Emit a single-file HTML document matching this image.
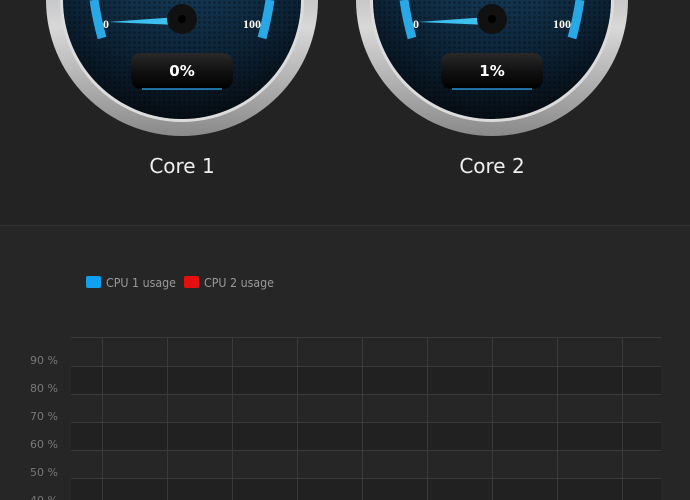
<!DOCTYPE html>
<html><head><style>
body{margin:0;width:690px;height:500px;overflow:hidden;background:#262626;font-family:"DejaVu Sans","Liberation Sans",sans-serif}
</style></head><body>
<svg width="690" height="500" xmlns="http://www.w3.org/2000/svg" style="position:absolute;left:0;top:0">
<defs>
<linearGradient id="ring" x1="0" y1="0" x2="0" y2="1">
<stop offset="0" stop-color="#777"/><stop offset="0.6" stop-color="#d8d8d8"/><stop offset="1" stop-color="#8a8a8a"/></linearGradient>
<radialGradient id="face" cx="0.5" cy="0.2" r="0.8">
<stop offset="0" stop-color="#1d4b70"/><stop offset="0.7" stop-color="#0c2336"/><stop offset="1" stop-color="#060d14"/></radialGradient>
<pattern id="hex" width="5" height="5" patternUnits="userSpaceOnUse"><circle cx="2.5" cy="2.5" r="1.3" fill="#000" opacity="0.35"/></pattern>
<linearGradient id="pill" x1="0" y1="0" x2="0" y2="1"><stop offset="0" stop-color="#2a2a2a"/><stop offset="0.5" stop-color="#111"/><stop offset="1" stop-color="#000"/></linearGradient>
<g id="gauge">
<circle cx="0" cy="0" r="136" fill="url(#ring)"/>
<circle cx="0" cy="0" r="122" fill="#dcdcdc"/>
<circle cx="0" cy="0" r="119" fill="url(#face)"/>
<circle cx="0" cy="0" r="119" fill="url(#hex)"/>
<path d="M-88 0 Q-85 20 -80 38" stroke="#29a8e6" stroke-width="9" fill="none"/>
<path d="M88 0 Q85 20 80 38" stroke="#29a8e6" stroke-width="9" fill="none"/>
<polygon points="-74,22 -4,17 -4,25" fill="#3cc0f0"/>
<circle cx="0" cy="19" r="15" fill="#111"/>
<circle cx="0" cy="19" r="4" fill="#000"/>
<text x="-76" y="28" fill="#fff" font-size="12" font-weight="bold" font-family="Liberation Serif,serif" text-anchor="middle">0</text>
<text x="70" y="28" fill="#fff" font-size="12" font-weight="bold" font-family="Liberation Serif,serif" text-anchor="middle">100</text>
<rect x="-51" y="53" width="102" height="36" rx="10" fill="url(#pill)"/>
<line x1="-40" y1="89" x2="40" y2="89" stroke="#2a90d0" stroke-width="1.5"/>
</g>
</defs>
<rect x="0" y="0" width="690" height="225" fill="#232323"/>
<line x1="0" y1="225.5" x2="690" y2="225.5" stroke="#333"/>
<use href="#gauge" x="182" y="0"/>
<use href="#gauge" x="492" y="0"/>
<text x="182" y="76" fill="#fff" font-size="15" font-weight="bold" text-anchor="middle">0%</text>
<text x="492" y="76" fill="#fff" font-size="15" font-weight="bold" text-anchor="middle">1%</text>
<text x="182" y="173" fill="#eee" font-size="20" text-anchor="middle">Core 1</text>
<text x="492" y="173" fill="#eee" font-size="20" text-anchor="middle">Core 2</text>
<rect x="86" y="276" width="15" height="12" rx="2" fill="#10a0f0"/>
<text x="106" y="287" fill="#999" font-size="12" textLength="70" lengthAdjust="spacingAndGlyphs">CPU 1 usage</text>
<rect x="184" y="276" width="15" height="12" rx="2" fill="#e41010"/>
<text x="204" y="287" fill="#999" font-size="12" textLength="70" lengthAdjust="spacingAndGlyphs">CPU 2 usage</text>
<rect x="71" y="366" width="590" height="28" fill="#212121"/>
<rect x="71" y="422" width="590" height="28" fill="#212121"/>
<rect x="71" y="478" width="590" height="22" fill="#212121"/>
<g stroke="#3a3a3a" stroke-width="1">
<line x1="71" y1="337.5" x2="661" y2="337.5"/>
<line x1="71" y1="366.5" x2="661" y2="366.5"/>
<line x1="71" y1="394.5" x2="661" y2="394.5"/>
<line x1="71" y1="422.5" x2="661" y2="422.5"/>
<line x1="71" y1="450.5" x2="661" y2="450.5"/>
<line x1="71" y1="478.5" x2="661" y2="478.5"/>
<line x1="102.5" y1="337" x2="102.5" y2="500"/>
<line x1="167.5" y1="337" x2="167.5" y2="500"/>
<line x1="232.5" y1="337" x2="232.5" y2="500"/>
<line x1="297.5" y1="337" x2="297.5" y2="500"/>
<line x1="362.5" y1="337" x2="362.5" y2="500"/>
<line x1="427.5" y1="337" x2="427.5" y2="500"/>
<line x1="492.5" y1="337" x2="492.5" y2="500"/>
<line x1="557.5" y1="337" x2="557.5" y2="500"/>
<line x1="622.5" y1="337" x2="622.5" y2="500"/>
</g>
<g fill="#777" font-size="11" text-anchor="end">
<text x="58" y="364">90 %</text>
<text x="58" y="392">80 %</text>
<text x="58" y="420">70 %</text>
<text x="58" y="448">60 %</text>
<text x="58" y="476">50 %</text>
<text x="58" y="504">40 %</text>
</g>
</svg>
</body></html>
